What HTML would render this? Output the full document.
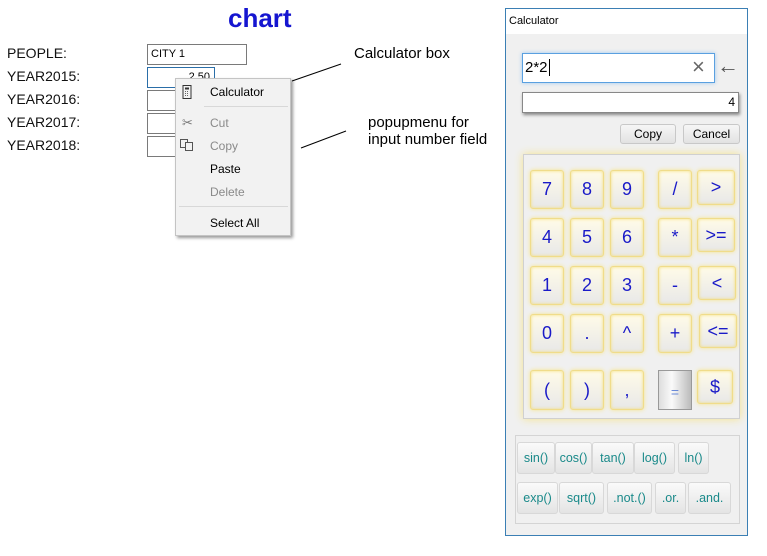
<!DOCTYPE html>
<html><head><style>
body{margin:0;width:767px;height:556px;background:#fff;position:relative;overflow:hidden;font-family:"Liberation Sans",sans-serif;}
.a{position:absolute;}
.lbl{font-size:14px;color:#111;left:7px;}
.inp{border:1px solid #7a7a7a;background:#fff;height:21px;box-sizing:border-box;font-size:11px;line-height:19px;padding-left:3px;}
.mi{position:absolute;left:34px;font-size:12px;color:#000;}
.dis{color:#8a8a8a;}
.k{position:absolute;box-sizing:border-box;border:1px solid #f0dc8a;border-radius:3px;background:linear-gradient(#fffbe8,#e8e8e8);box-shadow:0 0 4px #f7e48a, inset 0 0 3px #f3de7a;color:#1a1ac8;font-size:18px;text-align:center;}
.f{position:absolute;box-sizing:border-box;border:1px solid #d8d8d8;border-radius:3px;background:linear-gradient(#fafafa,#e4e4e4);color:#1a8a8a;font-size:12.5px;text-align:center;line-height:30px;height:32px;}
.btn{position:absolute;box-sizing:border-box;border:1px solid #c8c8c8;border-radius:3px;background:linear-gradient(#f6f6f6,#e2e2e2);font-size:12px;text-align:center;line-height:18px;height:20px;}
</style></head><body>
<div class="a" style="left:228px;top:3px;font-size:26px;font-weight:bold;color:#1515d0;">chart</div>
<div class="a lbl" style="top:45px">PEOPLE:</div>
<div class="a lbl" style="top:68px">YEAR2015:</div>
<div class="a lbl" style="top:91px">YEAR2016:</div>
<div class="a lbl" style="top:114px">YEAR2017:</div>
<div class="a lbl" style="top:137px">YEAR2018:</div>
<div class="a inp" style="left:147px;top:44px;width:100px;">CITY 1</div>
<div class="a inp" style="left:147px;top:67px;width:68px;border-color:#2a6ea8;text-align:right;padding-right:4px">2.50</div>
<div class="a inp" style="left:147px;top:90px;width:68px;"></div>
<div class="a inp" style="left:147px;top:113px;width:68px;"></div>
<div class="a inp" style="left:147px;top:136px;width:68px;"></div>
<div class="a" style="left:175px;top:78px;width:116px;height:158px;background:#f2f2f2;border:1px solid #c4c4c4;box-sizing:border-box;box-shadow:2px 2px 3px #999;">
 <svg class="a" style="left:6px;top:6px" width="10" height="14"><rect x="1" y="0.5" width="8" height="13" fill="none" stroke="#333"/><rect x="3" y="2.5" width="4" height="2" fill="#333"/><g fill="#666"><rect x="3" y="6" width="1" height="1"/><rect x="5" y="6" width="1" height="1"/><rect x="3" y="8" width="1" height="1"/><rect x="5" y="8" width="1" height="1"/><rect x="3" y="10" width="1" height="1"/><rect x="5" y="10" width="1" height="1"/></g></svg>
 <div class="mi" style="top:6px">Calculator</div>
 <div class="a" style="left:28px;top:27px;width:84px;height:1px;background:#d8d8d8"></div>
 <div class="a" style="left:6px;top:36px;font-size:13px;color:#777">✂</div>
 <div class="mi dis" style="top:37px">Cut</div>
 <svg class="a" style="left:4px;top:60px" width="14" height="12"><rect x="0.5" y="0.5" width="7" height="8" fill="none" stroke="#555"/><rect x="5.5" y="3.5" width="7" height="8" fill="#f2f2f2" stroke="#555"/></svg>
 <div class="mi dis" style="top:60px">Copy</div>
 <div class="mi" style="top:83px">Paste</div>
 <div class="mi dis" style="top:106px">Delete</div>
 <div class="a" style="left:3px;top:127px;width:109px;height:1px;background:#d8d8d8"></div>
 <div class="mi" style="top:137px">Select All</div>
</div>
<svg class="a" style="left:0;top:0" width="767" height="556"><line x1="292" y1="81" x2="341" y2="64" stroke="#000"/><line x1="301" y1="148" x2="346" y2="131" stroke="#000"/></svg>
<div class="a" style="left:354px;top:45px;font-size:15px">Calculator box</div>
<div class="a" style="left:368px;top:114px;font-size:15px;line-height:17px">popupmenu for<br>input number field</div>

<div class="a" style="left:505px;top:8px;width:243px;height:528px;border:1px solid #3b7fb4;box-sizing:border-box;background:#f0f0f0;">
 <div class="a" style="left:0;top:0;width:241px;height:25px;background:#fff;font-size:11px;line-height:24px;padding-left:3px;box-sizing:border-box">Calculator</div>
 <div class="a" style="left:16px;top:44px;width:193px;height:30px;border:1px solid #5aa0e0;box-shadow:0 0 4px #9cc8f0;background:#fff;box-sizing:border-box;font-size:15px;line-height:28px;padding-left:2px">2*2<span style="border-left:1px solid #000;margin-left:1px"></span></div>
 <div class="a" style="left:186px;top:46px;font-size:22px;color:#666;line-height:24px">×</div>
 <div class="a" style="left:211px;top:44px;font-size:22px;color:#555;line-height:26px">←</div>
 <div class="a" style="left:16px;top:83px;width:217px;height:21px;border:1px solid #888;box-shadow:1px 2px 3px #888;background:#fff;box-sizing:border-box;font-size:12px;line-height:19px;text-align:right;padding-right:3px">4</div>
 <div class="btn" style="left:114px;top:115px;width:56px">Copy</div>
 <div class="btn" style="left:177px;top:115px;width:57px">Cancel</div>
 <div class="a" style="left:17px;top:145px;width:217px;height:265px;border:1px solid #d0d0d0;box-shadow:0 0 8px #f5e38a;box-sizing:border-box;background:#f0f0f0"></div>
 <div class="a" style="left:9px;top:426px;width:225px;height:89px;border:1px solid #d4d4d4;box-sizing:border-box"></div>
</div>
<div id="keys"></div>
<script>
var K=[
[530,170,34,39,'7'],[570,170,34,39,'8'],[610,170,34,39,'9'],[658,170,34,39,'/'],[697,170,38,35,'&gt;'],
[530,218,34,39,'4'],[570,218,34,39,'5'],[610,218,34,39,'6'],[658,218,34,39,'*'],[697,218,38,34,'&gt;='],
[530,266,34,39,'1'],[570,266,34,39,'2'],[610,266,34,39,'3'],[658,266,34,39,'-'],[698,266,38,34,'&lt;'],
[530,314,34,39,'0'],[570,314,34,39,'.'],[610,314,34,39,'^'],[658,314,34,39,'+'],[699,314,38,34,'&lt;='],
[530,370,34,40,'('],[570,370,34,40,')'],[610,370,34,40,','],[697,370,36,34,'$']];
var h='';K.forEach(function(k){h+='<div class="k" style="left:'+k[0]+'px;top:'+k[1]+'px;width:'+k[2]+'px;height:'+k[3]+'px;line-height:'+(k[3]-2)+'px">'+k[4]+'</div>';});
h+='<div class="a" style="left:658px;top:370px;width:34px;height:40px;background:linear-gradient(90deg,#ddd,#fafafa 40%,#bbb);border:1px solid #999;box-sizing:border-box;color:#6a8ad8;text-align:center;line-height:42px;font-size:14px">=</div>';
var F=[[517,442,38,'sin()'],[555,442,37,'cos()'],[592,442,42,'tan()'],[634,442,41,'log()'],[678,442,31,'ln()'],
[517,482,41,'exp()'],[559,482,45,'sqrt()'],[607,482,45,'.not.()'],[655,482,31,'.or.'],[688,482,43,'.and.']];
F.forEach(function(f){h+='<div class="f" style="left:'+f[0]+'px;top:'+f[1]+'px;width:'+f[2]+'px">'+f[3]+'</div>';});
document.getElementById('keys').innerHTML=h;
</script>
</body></html>
